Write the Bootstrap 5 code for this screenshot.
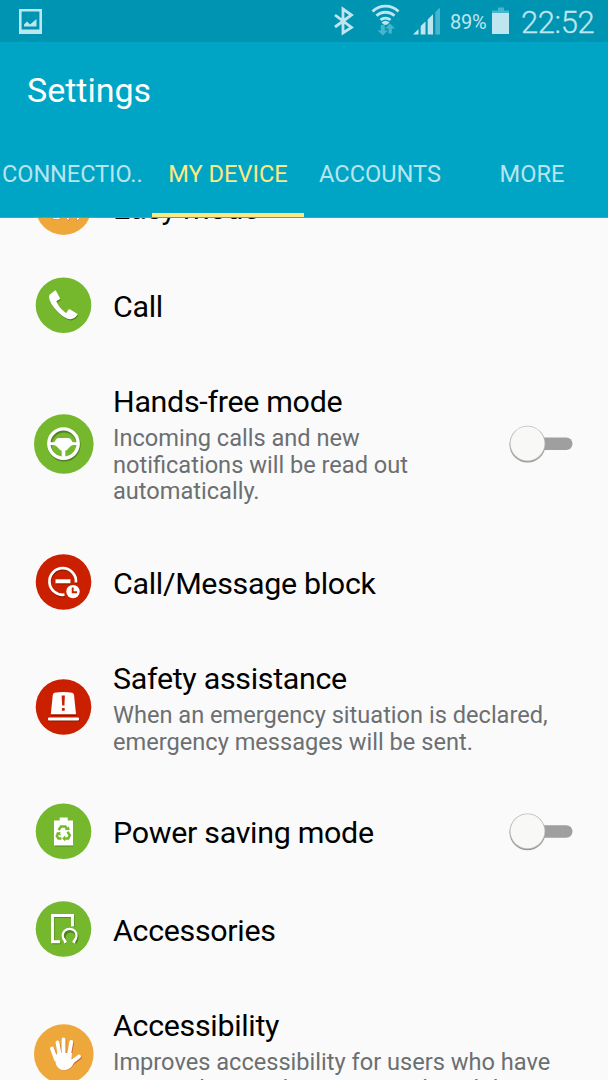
<!DOCTYPE html>
<html lang="en">
<head>
<meta charset="utf-8">
<meta name="viewport" content="width=device-width, initial-scale=1">
<title>Settings</title>
<link href="https://cdn.jsdelivr.net/npm/bootstrap@5.3.0/dist/css/bootstrap.min.css" rel="stylesheet">
<style>
body{font-family:Roboto,sans-serif;background:#fafafa;height:1080px;overflow:hidden;color:#000}
svg{display:block;flex:none}
header{z-index:2}
.status{height:42px;background:#0094b3;color:#bfe6ee}
.status .pct{font-size:20px;line-height:42px;width:37px;margin:1px 4px 0 9px;letter-spacing:-.3px}
.status .clock{font-size:31px;line-height:42px;font-weight:300;margin:2px 13px 0 11px;width:73px;letter-spacing:-.4px;-webkit-text-stroke:.3px #bfe6ee}
.topbar{height:176px;background:#00a5c6;border-bottom:1px solid #2fadc2}
.title{font-size:34px;line-height:40px;padding:28px 27px 0;height:88px;color:#fff;font-weight:400}
.tabs .nav-link{height:87px;padding:30px 0 0;font-size:23.6px;line-height:28px;color:#b8e4ee;text-align:center;border-bottom:4px solid transparent;white-space:nowrap;width:152px;border-radius:0}
.tabs .nav-link.cut{text-align:left;padding-left:2px;letter-spacing:-.1px}
.tabs .nav-link.active{color:#ffe981;border-color:#fae982}
.list{margin-top:-60px}
.item{height:98px;padding:0 35px 0 34px}
.item.two{height:151px}
.item.three{height:179px}
.ico{width:60px;margin-right:19px}
.name{font-size:30.4px;line-height:36px;white-space:nowrap;padding-top:3px;letter-spacing:-.3px}
.two .name,.three .name{padding-top:2px}
.desc{font-size:23.6px;line-height:26.8px;color:#6b6f72;white-space:nowrap;padding-top:5px}
.two .desc{margin-bottom:-2px}
.three .desc{margin-bottom:0}
.switch{width:64px;height:40px}
</style>
</head>
<body>
<div class="d-flex flex-column h-100">
<header class="position-relative">
<div class="status d-flex align-items-start">
<svg width="304" height="42" viewBox="0 0 304 42"><path d="M20.3 10.3h20.4v22.4H20.3z" fill="none" stroke="#bfe6ee" stroke-width="2.6"/><path d="M20 29.500h21v4H20z" fill="#bfe6ee"/><path d="M24 26.500v-2l3-3 3 3 6.500-5.500v7.500z" fill="#bfe6ee"/></svg>
<svg width="137" height="42" viewBox="304 0 137 42" fill="none" stroke="#bfe6ee">
<path d="M335 15l16.500 12.500-8.500 5.500V9l8.500 6-16.500 12" stroke-width="2.800"/>
<g stroke-width="2.900"><path d="M372.500 11.500a18.500 18.500 0 0 1 26 0"/><path d="M376.500 15.800a13 13 0 0 1 18 0"/><path d="M380.500 20a7.500 7.500 0 0 1 10 0"/></g><path d="M381.500 22.500q4-3.300 8 0l-2.500 2.200h-3z" fill="#bfe6ee" stroke="none"/>
<path d="M380.800 25h4v5.500h3.200l-5.200 5-5.200-5h3.200zM388.500 33.500v-5H385l5-5 5 5h-3.200v5z" fill="#46b6ce" stroke="none"/>
<path d="M413 34.500l5.500-5.500v5.500zM420.700 34.500v-8.500l4.800-4.500v13zM427.700 34.500V19.500l5.300-5.300v20.300z" fill="#bfe6ee" stroke="none"/><path d="M435.300 34.500V12l4.700-4.500v27z" fill="#46b6ce" stroke="none"/>
</svg>
<span class="pct">89%</span>
<svg width="19" height="42" viewBox="491 0 19 42"><path d="M498 7.500h6v3h5v3h-17v-3h6z" fill="#46b6ce"/><path d="M492 13h17v21h-17z" fill="#bfe6ee"/></svg>
<span class="clock">22:52</span>
</div>
<div class="topbar">
<h1 class="title m-0">Settings</h1>
<nav class="nav tabs flex-nowrap">
<a class="nav-link cut">CONNECTIO..</a><a class="nav-link active">MY DEVICE</a><a class="nav-link">ACCOUNTS</a><a class="nav-link">MORE</a>
</nav>
</div>
</header>
<main class="list">
<div class="item d-flex align-items-center">
<svg class="ico" height="60" viewBox="0 0 60 60"><circle cx="29.500" cy="30" r="28" fill="#eea73a"/><path d="M19 40h7v2.500h-7zM30 39l5 5v-5zM42 39h6l-5 5z" fill="#fff" stroke="#c75d2c" stroke-width=".5"/></svg>
<div class="name">Easy mode</div></div>
<div class="item d-flex align-items-center">
<svg class="ico" height="60" viewBox="0 0 60 60"><circle cx="29.500" cy="30.200" r="27.800" fill="#75b72d"/><g transform="translate(0 .7)"><path d="M15.500 19l5.500-4.300q.7-.4 1 .3l4 7.500q.2.600-.4 1l-3.300 2q2.500 6 8 10.500 1 1 2 1.300l2.200-3.500q.5-.6 1.200-.2l7.500 4.400q.8.500.2 1.100-3 4.300-7 4.400-5 .2-12.500-7.300-8.500-8.500-8.900-15z" transform="translate(.5 1.200)" fill="#507f1f"/><path d="M15.500 19l5.500-4.300q.7-.4 1 .3l4 7.500q.2.600-.4 1l-3.300 2q2.500 6 8 10.500 1 1 2 1.300l2.200-3.500q.5-.6 1.200-.2l7.500 4.400q.8.500.2 1.100-3 4.300-7 4.400-5 .2-12.500-7.300-8.500-8.500-8.900-15z" fill="#fff"/></g></svg>
<div class="name">Call</div></div>
<div class="item three d-flex align-items-center">
<svg class="ico" height="60" viewBox="0 0 60 60"><circle cx="29.800" cy="30" r="29.800" fill="#75b72d"/><circle cx="30.100" cy="31" r="14.500" fill="none" stroke="#4f8220" stroke-width="4"/><circle cx="29.500" cy="29.600" r="14.700" fill="none" stroke="#fff" stroke-width="3.400"/><path d="M15 28.200h4.500q1.500 0 2.500-2.700.6-1.500 2.500-1.500h10q1.900 0 2.500 1.500 1 2.700 2.500 2.700H44v2.800h-4.500q-2.500 0-4.500 2.800-1.800 2.500-3.700 3v8.500h-3.600v-8.500q-1.900-.5-3.700-3-2-2.800-4.500-2.800H15z" fill="#fff"/></svg>
<div class="flex-grow-1"><div class="name">Hands-free mode</div><div class="desc">Incoming calls and new<br>notifications will be read out<br>automatically.</div></div>
<svg class="switch" viewBox="0 0 64 40"><rect x="24" y="13.500" width="39.500" height="12.500" rx="6.200" fill="#9f9f9f"/><circle cx="18.500" cy="20.600" r="18" fill="#999"/><circle cx="18.500" cy="19.600" r="17.800" fill="#bbb"/><circle cx="18.500" cy="19.500" r="17" fill="#f8f8f6"/></svg></div>
<div class="item d-flex align-items-center">
<svg class="ico" height="60" viewBox="0 0 60 60"><circle cx="29.500" cy="30" r="27.800" fill="#ca2000"/><g fill="none" stroke="#8e1600" transform="translate(.5 1)"><path d="M30.500 43A13.300 13.300 0 1 1 42 30.500" stroke-width="2.600"/><path d="M21.500 29.500h15" stroke-width="4"/></g><path d="M30.500 42.700A13.300 13.300 0 1 1 42 30.500" fill="none" stroke="#fff" stroke-width="2.700"/><path d="M21.500 29.300h15" stroke="#fff" stroke-width="4"/><circle cx="39" cy="39.600" r="6.700" fill="#fff"/><path d="M38.700 35.500v4.700h4.300" fill="none" stroke="#ca2000" stroke-width="1.900"/></svg>
<div class="name">Call/Message block</div></div>
<div class="item two d-flex align-items-center">
<svg class="ico" height="60" viewBox="0 0 60 60"><circle cx="29.500" cy="30" r="27.800" fill="#ca2000"/><path d="M17 37.500h25.500v1.500H17zM14.500 42h31v2.500h-31z" fill="#891600"/><path d="M20.500 15.800q8.800-1.800 17.600 0 1.600.5 1.900 2L42 37.300H16.800l2-19.500q.3-1.600 1.700-2z" fill="#fff"/><rect x="14" y="40.500" width="31" height="3" rx="1" fill="#fff"/><path d="M27.600 18.500h3.300l-.5 10h-2.200zM27.900 31h2.800v2.800h-2.800z" fill="#ca2000"/></svg>
<div class="flex-grow-1"><div class="name">Safety assistance</div><div class="desc">When an emergency situation is declared,<br>emergency messages will be sent.</div></div></div>
<div class="item d-flex align-items-center">
<svg class="ico" height="60" viewBox="0 0 60 60"><circle cx="29.500" cy="30.300" r="27.800" fill="#75b72d"/><path d="M21 43.500h18v2H21z" fill="#4f8220"/><path d="M25.700 16.500h8v3h5.300v25H20v-25h5.700z" fill="#fff"/><g stroke="#75b72d" stroke-width="2.500" fill="none"><path d="M24.500 29l2.600-3.600h4.200l1.700 2.600"/><path d="M33.500 30.800l2.300 3.500-1.500 3.200h-4"/><path d="M27.500 37.500h-3l-1.700-2.600 1.700-3"/></g><path d="M30.800 29.300l5-.3-1-3.800zM31.200 34.200v6.200l-3-3zM21.800 31.900l4.400-1.100.5 4z" fill="#75b72d"/></svg>
<div class="name flex-grow-1">Power saving mode</div>
<svg class="switch" viewBox="0 0 64 40"><g transform="translate(0 .7)"><rect x="24" y="13.500" width="39.500" height="12.500" rx="6.200" fill="#9f9f9f"/><circle cx="18.500" cy="20.600" r="18" fill="#999"/><circle cx="18.500" cy="19.600" r="17.800" fill="#bbb"/><circle cx="18.500" cy="19.500" r="17" fill="#f8f8f6"/></g></svg></div>
<div class="item d-flex align-items-center">
<svg class="ico" height="60" viewBox="0 0 60 60"><circle cx="29.500" cy="30" r="27.800" fill="#75b72d"/><g fill="none" stroke="#4f8220" transform="translate(.7 1)"><path d="M26 43h-7.500V16.500h20V27" stroke-width="2.600"/><path d="M31.500 43q-2-2-2-5.500a6.500 6.500 0 0 1 13 0q0 3.500-2 5.500" stroke-width="2.800"/></g><path d="M26 42.800h-7.500V16.500h20V27.500" fill="none" stroke="#fff" stroke-width="2.900"/><path d="M31 42q-2.300-2-2.300-5.300a6.900 6.900 0 0 1 13.800 0q0 3.300-2.300 5.300" fill="none" stroke="#fff" stroke-width="2.200"/><path d="M28.500 38l2 1 2.600 4-2.800 1.500zM42.700 38l-2 1-2.600 4 2.800 1.500z" fill="#fff"/></svg>
<div class="name">Accessories</div></div>
<div class="item two d-flex align-items-center">
<svg class="ico" height="60" viewBox="0 0 60 60"><circle cx="29.800" cy="30" r="29.800" fill="#eea73a"/><path d="M18 24.500l4 11M23.500 18.500l2.300 13M29.600 15.500v15M37.300 18l-2.500 14M45 32.500l-7 5.500" fill="none" stroke="#c9652d" stroke-width="4" stroke-linecap="round" transform="translate(.7 1)"/><path d="M20.500 33h17l2.500 5q-3 7-9.500 7.500-6 0-8.500-5.800z" fill="#c9652d" transform="translate(.5 1)"/><path d="M18 24.500l4 11M23.500 18.500l2.300 13M29.600 15.500v15M37.300 18l-2.500 14M45 32.500l-7 5.500" fill="none" stroke="#fff" stroke-width="3.900" stroke-linecap="round"/><path d="M20.500 33l3-4h14.500l-.5 6.300 3.500-1.500-1 5q-3 7-9.500 7.500-6 0-8.500-5.800z" fill="#fff"/></svg>
<div class="flex-grow-1"><div class="name">Accessibility</div><div class="desc">Improves accessibility for users who have<br>impaired vision, hearing or reduced dexterity.</div></div></div>
</main>
</div>
<script src="https://cdn.jsdelivr.net/npm/bootstrap@5.3.0/dist/js/bootstrap.bundle.min.js"></script>
</body>
</html>
